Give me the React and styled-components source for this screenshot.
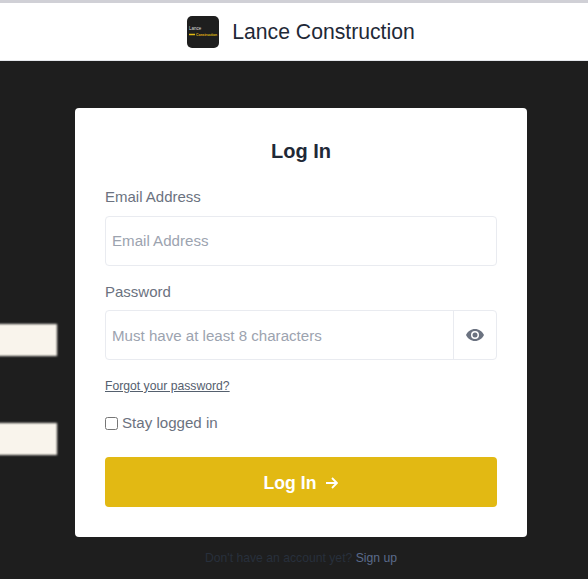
import React, { useState } from "react";
import styled, { createGlobalStyle } from "styled-components";

const GlobalStyle = createGlobalStyle`
  html, body {
    margin: 0;
    padding: 0;
    height: 579px;
    overflow: hidden;
    background: #1e1e1e;
    font-family: "Liberation Sans", Arial, sans-serif;
  }
`;

const Page = styled.div`
  position: relative;
  width: 602px;
  height: 579px;
  overflow: hidden;
  background: #1e1e1e;
`;

const TopStrip = styled.div`
  height: 3px;
  background: #d0d0d6;
`;

const Header = styled.header`
  height: 57px;
  background: #fff;
  border-bottom: 1px solid #e5e7eb;
  display: flex;
  align-items: center;
  justify-content: center;
  gap: 13px;
`;

const Logo = styled.div`
  width: 32px;
  height: 32px;
  border-radius: 5px;
  background: #1e1e1e;
  display: flex;
  align-items: center;
  justify-content: center;
`;

const Brand = styled.span`
  font-size: 21.2px;
  color: #1f2937;
`;

const Main = styled.main`
  display: flex;
  flex-direction: column;
  align-items: center;
  padding-top: 47px;
`;

const Card = styled.form`
  width: 452px;
  height: 429px;
  box-sizing: border-box;
  padding: 30px;
  background: #fff;
  border-radius: 4px;
  display: flex;
  flex-direction: column;
`;

const Title = styled.h1`
  margin: 0 0 23px;
  font-size: 20px;
  line-height: 26px;
  font-weight: 700;
  text-align: center;
  color: #1f2937;
`;

const Label = styled.label`
  display: block;
  font-size: 15px;
  line-height: 20px;
  color: #6b7280;
  margin-bottom: ${props => props.$gap}px;
`;

const Field = styled.div`
  display: flex;
  height: 50px;
  box-sizing: border-box;
  border: 1px solid #e9ebf0;
  border-radius: 4px;
  margin-bottom: ${props => props.$gap}px;
`;

const Input = styled.input`
  flex: 1;
  min-width: 0;
  border: 0;
  outline: 0;
  padding: 0 6px ${props => (props.$lift ? 2 : 0)}px;
  background: transparent;
  font-family: inherit;
  font-size: 15.1px;
  color: #1f2937;

  &::placeholder {
    color: #9ca3af;
    opacity: 1;
  }
`;

const EyeButton = styled.button`
  width: 43px;
  border: 0;
  border-left: 1px solid #e9ebf0;
  background: transparent;
  padding: 0;
  display: flex;
  align-items: center;
  justify-content: center;
  color: #6b7280;
`;

const Forgot = styled.a`
  font-size: 12.2px;
  line-height: 14px;
  color: #55606e;
  text-decoration: underline;
  align-self: flex-start;
  margin: 19px 0 20px;
`;

const Remember = styled.label`
  display: flex;
  align-items: center;
  gap: 4px;
  font-size: 15.1px;
  line-height: 20px;
  color: #6b7280;
`;

const Check = styled.input`
  width: 13px;
  height: 13px;
  margin: 0;
`;

const Submit = styled.button`
  margin-top: 24px;
  height: 50px;
  border: 0;
  border-radius: 4px;
  padding: 2px 0 0;
  background: #e2b913;
  color: #fff;
  font-family: inherit;
  font-size: 17.6px;
  font-weight: 700;
  display: flex;
  align-items: center;
  justify-content: center;
  gap: 10px;
`;

const Footer = styled.p`
  margin: 14px 0 0;
  font-size: 12.2px;
  line-height: 15px;
  color: #28303c;
`;

const SignUp = styled.a`
  color: #5b6b8c;
`;

const StrayBlock = styled.div`
  position: absolute;
  left: -4px;
  top: ${props => props.$top}px;
  width: 61px;
  height: 32px;
  background: #f9f4ec;
  filter: blur(0.8px);
`;

const Eye = () => (
  <svg width="18" height="12" viewBox="0 0 18 12" fill="currentColor">
    <path
      fillRule="evenodd"
      d="M9 0C5 0 1.700 2.500 0 6c1.700 3.500 5 6 9 6s7.300-2.500 9-6c-1.700-3.500-5-6-9-6zm0 10a4 4 0 1 1 0-8 4 4 0 0 1 0 8zm0-6.500a2.500 2.500 0 1 0 0 5 2.500 2.500 0 0 0 0-5z"
    />
  </svg>
);

const Arrow = () => (
  <svg width="12" height="12" viewBox="0 0 12 12" fill="none" stroke="currentColor" strokeWidth="1.800">
    <path d="M0 6h10.500M6 1l5 5-5 5" />
  </svg>
);

const LogoMark = () => (
  <svg width="30" height="14" viewBox="0 0 30 14">
    <text x="1" y="5" fontSize="4.500" fill="#dddddd" fontFamily="Liberation Sans">Lance</text>
    <path d="M1 9.500h6" stroke="#e2b913" strokeWidth="1.500" />
    <text x="8" y="11" fontSize="3.400" fontWeight="700" fill="#e2b913" fontFamily="Liberation Sans">Construction</text>
  </svg>
);

export default function App() {
  const [email, setEmail] = useState("");
  const [password, setPassword] = useState("");

  return (
    <Page>
      <GlobalStyle />
      <TopStrip />
      <Header>
        <Logo>
          <LogoMark />
        </Logo>
        <Brand>Lance Construction</Brand>
      </Header>
      <Main>
        <Card onSubmit={e => e.preventDefault()}>
          <Title>Log In</Title>
          <Label htmlFor="email" $gap={9}>Email Address</Label>
          <Field $gap={16}>
            <Input
              id="email"
              $lift
              placeholder="Email Address"
              value={email}
              onChange={e => setEmail(e.target.value)}
            />
          </Field>
          <Label htmlFor="password" $gap={8}>Password</Label>
          <Field $gap={0}>
            <Input
              id="password"
              type="password"
              placeholder="Must have at least 8 characters"
              value={password}
              onChange={e => setPassword(e.target.value)}
            />
            <EyeButton type="button" aria-label="Show password">
              <Eye />
            </EyeButton>
          </Field>
          <Forgot href="#">Forgot your password?</Forgot>
          <Remember>
            <Check type="checkbox" />
            Stay logged in
          </Remember>
          <Submit type="submit">
            Log In
            <Arrow />
          </Submit>
        </Card>
        <Footer>
          Don't have an account yet? <SignUp>Sign up</SignUp>
        </Footer>
      </Main>
      <StrayBlock $top={324} />
      <StrayBlock $top={423} />
    </Page>
  );
}
